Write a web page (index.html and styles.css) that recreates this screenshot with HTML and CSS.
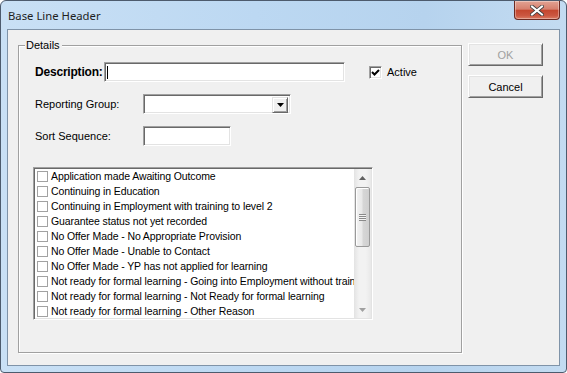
FILE: index.html
```html
<!DOCTYPE html>
<html lang="en">
<head>
    <meta charset="UTF-8">
    <title>Base Line Header</title>
    <link rel="stylesheet" href="styles.css">
</head>
<body>
    <div class="window">
        <div class="titlebar">
            <span class="title">Base Line Header</span>
            <span class="close">
                <svg width="14" height="11" viewBox="0 0 14 11">
                    <path d="M2 1.5 L12 9.5 M12 1.5 L2 9.5" stroke="#3d3d3d" stroke-width="3.6" stroke-linecap="square"/>
                    <path d="M2 1.5 L12 9.5 M12 1.5 L2 9.5" stroke="#ffffff" stroke-width="2" stroke-linecap="square"/>
                </svg>
            </span>
        </div>

        <div class="client">
            <div class="group">
                <span class="group-title">Details</span>

                <div class="row">
                    <label class="label-desc">Description:</label>
                    <div class="field field-desc"><span class="caret"></span></div>
                    <span class="check">
                        <svg width="9" height="9" viewBox="0 0 9 9">
                            <polyline points="1,4 3.5,6.5 8,2" fill="none" stroke="#000" stroke-width="2"/>
                        </svg>
                    </span>
                    <span class="check-text">Active</span>
                </div>

                <div class="row row-gap">
                    <label class="label">Reporting Group:</label>
                    <div class="field field-select">
                        <span class="drop-btn">
                            <svg width="7" height="4" viewBox="0 0 7 4"><polygon points="0,0 7,0 3.5,4" fill="#000"/></svg>
                        </span>
                    </div>
                </div>

                <div class="row row-gap">
                    <label class="label">Sort Sequence:</label>
                    <div class="field field-sort"></div>
                </div>

                <div class="listbox">
                    <ul class="items">
                        <li><span class="box"></span>Application made Awaiting Outcome</li>
                        <li><span class="box"></span>Continuing in Education</li>
                        <li><span class="box"></span>Continuing in Employment with training to level 2</li>
                        <li><span class="box"></span>Guarantee status not yet recorded</li>
                        <li><span class="box"></span>No Offer Made - No Appropriate Provision</li>
                        <li><span class="box"></span>No Offer Made - Unable to Contact</li>
                        <li><span class="box"></span>No Offer Made - YP has not applied for learning</li>
                        <li><span class="box"></span>Not ready for formal learning - Going into Employment without training</li>
                        <li><span class="box"></span>Not ready for formal learning - Not Ready for formal learning</li>
                        <li><span class="box"></span>Not ready for formal learning - Other Reason</li>
                    </ul>
                    <div class="scrollbar">
                        <span class="arrow">
                            <svg width="7" height="4" viewBox="0 0 7 4"><polygon points="3.5,0 7,4 0,4" fill="#606060"/></svg>
                        </span>
                        <div class="track">
                            <div class="thumb">
                                <span class="grip"></span>
                            </div>
                        </div>
                        <span class="arrow">
                            <svg width="7" height="4" viewBox="0 0 7 4"><polygon points="0,0 7,0 3.5,4" fill="#a0a0a0"/></svg>
                        </span>
                    </div>
                </div>
            </div>

            <div class="buttons">
                <button disabled>OK</button>
                <button>Cancel</button>
            </div>
        </div>
    </div>
</body>
</html>
```

FILE: styles.css
```css
body {
    margin: 0;
    font-family: "Liberation Sans", Arial, sans-serif;
    font-size: 11px;
    color: #000;
    background: #fff;
}

.window {
    width: 567px;
    height: 373px;
    box-sizing: border-box;
    border: 1px solid #4d5b6d;
    border-radius: 6px 6px 4px 4px;
    padding: 0 6px 6px 6px;
    background: linear-gradient(90deg, #c9e0f5 0%, #bcd8f2 45%, #b6d3ee 75%, #c3dbf1 100%);
    display: flex;
    flex-direction: column;
}

.titlebar {
    height: 28px;
    display: flex;
    justify-content: space-between;
    align-items: center;
    padding-left: 1px;
}

.title {
    font-family: "Noto Sans", "Open Sans", sans-serif;
    font-size: 11.3px;
    color: #1e1e1e;
    margin-top: 1px;
}

.close {
    align-self: flex-start;
    width: 46px;
    height: 19px;
    box-sizing: border-box;
    border: 1px solid #6b2a22;
    border-top: none;
    border-radius: 0 0 4px 4px;
    background: linear-gradient(#e2a393 0%, #d6806e 45%, #c4472f 52%, #cb5640 80%, #da7b63 100%);
    display: flex;
    justify-content: center;
    align-items: center;
    box-shadow: inset 0 0 0 1px rgba(255,255,255,0.35);
}

.client {
    flex: 1;
    border: 1px solid #7f93a8;
    background: #f0f0f0;
    display: flex;
    align-items: flex-start;
    padding: 13px 0 0 10px;
}

.group {
    position: relative;
    width: 444px;
    height: 308px;
    box-sizing: border-box;
    margin-top: 2px;
    border: 1px solid #a0a0a0;
    box-shadow: inset 1px 1px 0 #fff, 1px 1px 0 #fff;
    padding: 16px 0 0 16px;
}

.group-title {
    position: absolute;
    top: -7px;
    left: 6px;
    padding: 0 2px 0 1px;
    background: #f0f0f0;
    line-height: 13px;
}

.row {
    display: flex;
    align-items: center;
    height: 20px;
}

.row-gap {
    margin-top: 12px;
}

.label-desc {
    width: 69px;
    font-weight: bold;
    font-size: 12px;
    letter-spacing: -0.2px;
}

.label {
    width: 108px;
}

.field {
    height: 20px;
    box-sizing: border-box;
    background: #fff;
    border: 1px solid;
    border-color: #a0a0a0 #fff #fff #a0a0a0;
    box-shadow: inset 1px 1px 0 #696969, inset -1px -1px 0 #e3e3e3;
    display: flex;
}

.field-desc {
    width: 241px;
    padding: 2px 0 0 2px;
}

.caret {
    width: 1px;
    height: 13px;
    margin-top: 1px;
    background: #000;
}

.field-select {
    width: 148px;
    justify-content: flex-end;
    padding: 2px;
}

.drop-btn {
    width: 16px;
    height: 16px;
    box-sizing: border-box;
    background: #f0f0f0;
    border: 1px solid;
    border-color: #e3e3e3 #696969 #696969 #e3e3e3;
    box-shadow: inset 1px 1px 0 #fff, inset -1px -1px 0 #a0a0a0;
    display: flex;
    justify-content: center;
    align-items: center;
}

.field-sort {
    width: 88px;
}

.check {
    width: 13px;
    height: 13px;
    box-sizing: border-box;
    margin-left: 24px;
    background: #fff;
    border: 1px solid;
    border-color: #a0a0a0 #fff #fff #a0a0a0;
    box-shadow: inset 1px 1px 0 #696969, inset -1px -1px 0 #e3e3e3;
    display: flex;
    justify-content: center;
    align-items: center;
}

.check-text {
    margin-left: 5px;
    margin-top: -1px;
}

.listbox {
    width: 340px;
    height: 153px;
    box-sizing: border-box;
    margin: 21px 0 0 -2px;
    background: #fff;
    border: 1px solid;
    border-color: #a0a0a0 #fff #fff #a0a0a0;
    box-shadow: inset 1px 1px 0 #696969, inset -1px -1px 0 #e3e3e3;
    padding: 1px;
    display: flex;
}

.items {
    flex: 1;
    margin: 0;
    padding: 0;
    list-style: none;
    overflow: hidden;
}

.items li {
    height: 15px;
    line-height: 15px;
    font-size: 10.5px;
    letter-spacing: -0.1px;
    white-space: nowrap;
    display: flex;
    align-items: center;
}

.box {
    flex: none;
    width: 11px;
    height: 11px;
    box-sizing: border-box;
    margin: 0 3px 0 2px;
    border: 1px solid #a2a2a2;
    background: #fff;
}

.scrollbar {
    width: 17px;
    flex: none;
    background: linear-gradient(90deg, #e3e3e3, #f2f2f2 30%, #f2f2f2 70%, #e8e8e8);
    display: flex;
    flex-direction: column;
}

.arrow {
    height: 17px;
    display: flex;
    justify-content: center;
    align-items: center;
}

.track {
    flex: 1;
    padding-top: 1px;
}

.thumb {
    width: 15px;
    height: 60px;
    margin-left: 1px;
    box-sizing: border-box;
    border: 1px solid #999;
    border-radius: 2px;
    background: linear-gradient(90deg, #f3f3f3, #e8e8e8 45%, #d6d6d6 55%, #cfcfcf);
    box-shadow: inset 1px 1px 0 #fff;
    display: flex;
    justify-content: center;
    align-items: center;
}

.grip {
    width: 7px;
    height: 7px;
    background: repeating-linear-gradient(#8a8a8a 0, #8a8a8a 1px, #f4f4f4 1px, #f4f4f4 2px);
}

.buttons {
    display: flex;
    flex-direction: column;
    gap: 9px;
    margin-left: 6px;
}

button {
    width: 75px;
    height: 23px;
    box-sizing: border-box;
    font-family: "Liberation Sans", Arial, sans-serif;
    font-size: 11px;
    color: #000;
    background: #f0f0f0;
    border: 1px solid;
    border-color: #fff #696969 #696969 #fff;
    box-shadow: inset 1px 1px 0 #e3e3e3, inset -1px -1px 0 #a0a0a0;
    padding: 0;
}

button:disabled {
    color: #a0a0a0;
}
```
